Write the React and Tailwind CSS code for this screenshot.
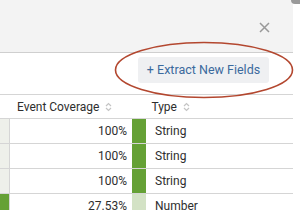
import React from "react";

const rows = [
  { cov: "100%", type: "String", left: "bg-[#eef0ea]", bar: "bg-[#65a135]" },
  { cov: "100%", type: "String", left: "bg-[#eef0ea]", bar: "bg-[#65a135]" },
  { cov: "100%", type: "String", left: "bg-[#eef0ea]", bar: "bg-[#65a135]" },
  { cov: "27.53%", type: "Number", left: "bg-[#65a135]", bar: "bg-[#d3e2c5]" },
];

const SortIcon = () => (
  <svg width="7" height="10" viewBox="0 0 7 10" className="ml-[6px]">
    <path d="M1 4 L3.5 1.5 L6 4" fill="none" stroke="#c4c4c4" strokeWidth="1.2" />
    <path d="M1 6 L3.5 8.5 L6 6" fill="none" stroke="#c4c4c4" strokeWidth="1.2" />
  </svg>
);

const App = () => {
  return (
    <div className="relative w-[300px] h-[210px] bg-white overflow-hidden text-[#2e2e2e] font-['Roboto',sans-serif]">
      <div className="absolute right-0 top-0 w-[9px] h-[4px] bg-[#9a9a9a] rounded-bl-full"></div>
      <div className="w-[293px]">
        <div className="h-[53px] bg-[#f3f3f3] border-b border-[#cfcfcf] flex items-start justify-end pt-[22px] pr-[23px]">
          <svg width="11" height="11" viewBox="0 0 11 11">
            <path d="M1 1 L10 10 M10 1 L1 10" stroke="#999" strokeWidth="1.5" />
          </svg>
        </div>
        <div className="h-[42px] border-b border-[#d5d5d5] flex items-start justify-end pt-[4px] pr-[24px]">
          <button className="h-[26px] w-[131px] bg-[#eff0f2] rounded-[3px] text-[#3b6a9d] text-[12.5px] flex items-center justify-center">
            + Extract New Fields
          </button>
        </div>
        <div className="h-[24px] border-b border-[#d5d5d5] flex items-center text-[12px]">
          <div className="w-[17px]"></div>
          <span>Event Coverage</span>
          <SortIcon />
          <div className="w-[39px]"></div>
          <span>Type</span>
          <SortIcon />
        </div>
        {rows.map((r, i) => (
          <div key={i} className="h-[25px] border-b border-[#d5d5d5] flex text-[12px]">
            <div className={`w-[10px] ${r.left} border-r border-[#d5d5d5]`}></div>
            <div className="w-[122px] flex items-center justify-end pr-[5px]">{r.cov}</div>
            <div className={`w-[14px] ${r.bar}`}></div>
            <div className="flex items-center pl-[9px]">{r.type}</div>
          </div>
        ))}
      </div>
      <svg className="absolute left-0 top-0" width="300" height="210">
        <ellipse cx="204" cy="70" rx="88.5" ry="27.5" fill="none" stroke="#b3472f" strokeWidth="1.6" />
      </svg>
    </div>
  );
};

export default App;
